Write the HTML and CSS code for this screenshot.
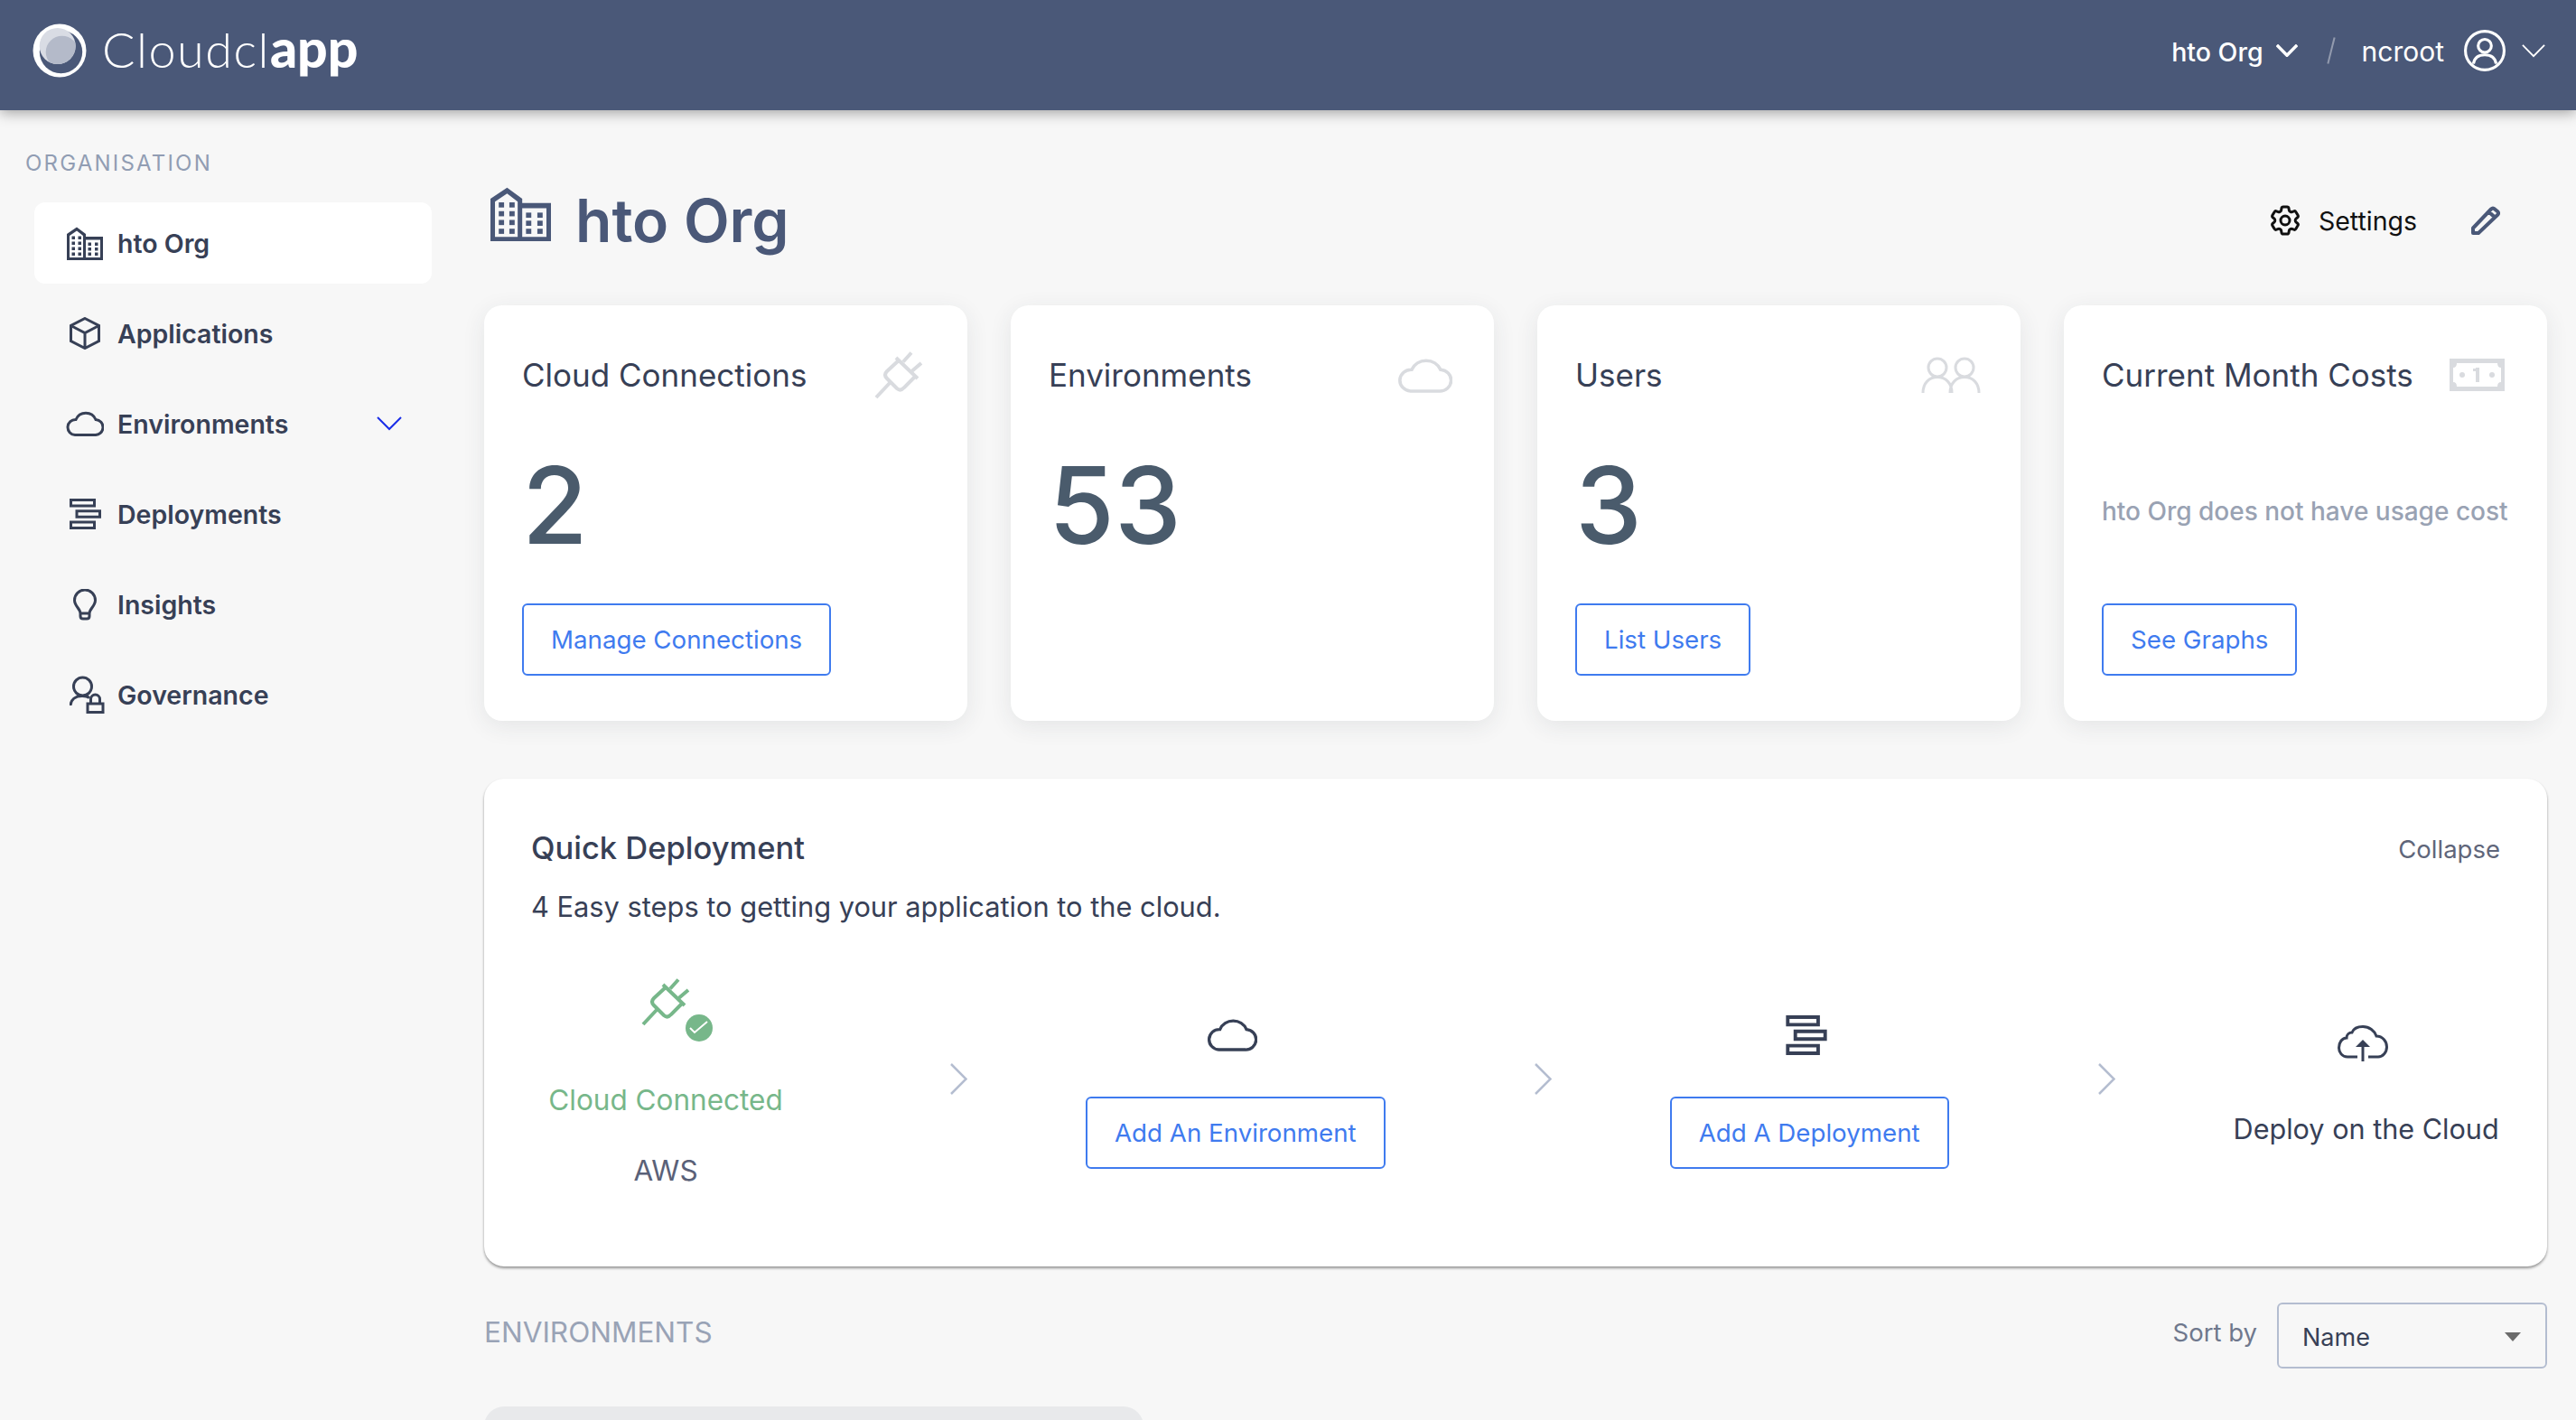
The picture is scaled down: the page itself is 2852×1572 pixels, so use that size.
FILE: index.html
```html
<!DOCTYPE html>
<html lang="en">
<head>
    <meta charset="UTF-8">
    <meta name="viewport" content="width=device-width, initial-scale=1.0">
    <title>Cloudclapp - hto Org</title>
    <link rel="stylesheet" href="styles.css">
</head>
<body>
    <!-- shared icons -->
    <svg class="icon-defs" aria-hidden="true">
        <symbol id="i-building" viewBox="0 0 40 37" preserveAspectRatio="none">
            <path class="fill" d="M0 37V8L11 0.5l10 7.5V11h19v26z"/>
            <path class="hole" d="M3 34V10l8-5.500 7 5.500v24zM21 14.500h16V34H21z"/>
            <g class="fill">
                <rect x="5.5" y="10.5" width="3.5" height="3.5"/><rect x="12.5" y="10.5" width="3.5" height="3.5"/>
                <rect x="5.5" y="16.5" width="3.5" height="3.5"/><rect x="12.5" y="16.5" width="3.5" height="3.5"/>
                <rect x="5.5" y="22.5" width="3.5" height="3.5"/><rect x="12.5" y="22.5" width="3.5" height="3.5"/>
                <rect x="5.5" y="28.5" width="3.5" height="3.5"/><rect x="12.5" y="28.5" width="3.5" height="3.5"/>
                <rect x="23.5" y="17.5" width="3.5" height="3.5"/><rect x="31" y="17.5" width="3.5" height="3.5"/>
                <rect x="23.5" y="23" width="3.5" height="3.5"/><rect x="31" y="23" width="3.5" height="3.5"/>
                <rect x="23.5" y="28.5" width="3.5" height="3.5"/><rect x="31" y="28.5" width="3.5" height="3.5"/>
            </g>
        </symbol>
        <symbol id="i-cube" viewBox="0 0 34 36">
            <path d="M17 1.5L32.5 9.5V26.5L17 34.5L1.5 26.5V9.5ZM1.5 9.5L17 17.5L32.5 9.5M17 17.5V34.5"/>
        </symbol>
        <symbol id="i-cloud" viewBox="0 0 42 28" preserveAspectRatio="none">
            <path d="M10 26.5h22a8.500 8.500 0 0 0 1-17A12 12 0 0 0 11 9.500a8.500 8.500 0 0 0-1 17z"/>
        </symbol>
        <symbol id="i-deploy" viewBox="0 0 35 34">
            <path d="M1.5 1.5h26V8h-26zM8 13.75h25.500v6.500H8zM1.5 26h26v6.500h-26z"/>
        </symbol>
        <symbol id="i-bulb" viewBox="0 0 26 35">
            <path d="M8 27C8 22 1.5 19 1.5 12.5A11.500 11.500 0 0 1 24.5 12.5C24.5 19 18 22 18 27ZM8 27v3q0 3 3 3h4q3 0 3-3v-3"/>
        </symbol>
        <symbol id="i-governance" viewBox="0 0 40 42">
            <circle cx="14.5" cy="12" r="10"/>
            <path d="M1 33C1.5 27 6 22.5 14 22.5c3 0 6 .5 8 2"/>
            <path d="M20 31h17v9.500H20zM23.5 31v-5a5 5 0 0 1 10 0v5"/>
        </symbol>
        <symbol id="i-plug" viewBox="0 0 54 53">
            <path d="M2 51L17 35M27 10L14 22Q10 26 14 30L25 41Q29 44.5 33 40L45 28M24 7L48 30M32 11.5L41 1.5M42 21.5L52 13"/>
        </symbol>
        <symbol id="i-people" viewBox="0 0 66 40">
            <circle cx="18" cy="12" r="10"/>
            <circle cx="48" cy="12" r="10"/>
            <path d="M2 40C2 29 9 22.5 18 22.5S34 29 34 40M32 40C32 29 39 22.5 48 22.5S64 29 64 40"/>
        </symbol>
        <symbol id="i-chevron" viewBox="0 0 28 16" preserveAspectRatio="none">
            <path d="M1 1L14 14L27 1"/>
        </symbol>
        <symbol id="i-step-arrow" viewBox="0 0 19 34" preserveAspectRatio="none">
            <path d="M1 1L17.5 17L1 33"/>
        </symbol>
    </svg>

    <header class="topbar">
        <div class="brand">
            <svg class="brand-mark" viewBox="0 0 60 60" aria-hidden="true">
                <defs><clipPath id="logo-clip"><circle cx="27.7" cy="25" r="20"/></clipPath></defs>
                <circle cx="30" cy="30" r="29.5" fill="#fff"/>
                <circle cx="31.5" cy="31.5" r="23.7" fill="#4a5878"/>
                <circle cx="27.7" cy="25" r="20" fill="#d9dce4"/>
                <circle cx="32.7" cy="31.7" r="18" fill="#b4bac9" clip-path="url(#logo-clip)"/>
            </svg>
            <span class="brand-name">Cloudcl<b>app</b></span>
        </div>
        <nav class="topbar-nav">
            <span class="topbar-org">hto Org</span>
            <svg class="topbar-chevron-bold" aria-hidden="true"><use href="#i-chevron"/></svg>
            <span class="topbar-slash"></span>
            <span class="topbar-user">ncroot</span>
            <svg class="topbar-avatar" viewBox="0 0 44 44" aria-hidden="true">
                <circle cx="22" cy="22" r="20.5"/>
                <circle cx="22" cy="17" r="7"/>
                <path d="M10 36C11 29 16 26.5 22 26.5S33 29 34 36"/>
            </svg>
            <svg class="topbar-chevron-thin" aria-hidden="true"><use href="#i-chevron"/></svg>
        </nav>
    </header>

    <div class="layout">
        <aside class="sidebar">
            <div class="sidebar-label">ORGANISATION</div>
            <ul class="side-nav">
                <li class="side-item active">
                    <span class="side-icon"><svg class="ic-building" aria-hidden="true"><use href="#i-building"/></svg></span>
                    hto Org
                </li>
                <li class="side-item">
                    <span class="side-icon"><svg class="ic-cube" aria-hidden="true"><use href="#i-cube"/></svg></span>
                    Applications
                </li>
                <li class="side-item">
                    <span class="side-icon"><svg class="ic-cloud" aria-hidden="true"><use href="#i-cloud"/></svg></span>
                    Environments
                    <svg class="side-chevron" aria-hidden="true"><use href="#i-chevron"/></svg>
                </li>
                <li class="side-item">
                    <span class="side-icon"><svg class="ic-deploy" aria-hidden="true"><use href="#i-deploy"/></svg></span>
                    Deployments
                </li>
                <li class="side-item">
                    <span class="side-icon"><svg class="ic-bulb" aria-hidden="true"><use href="#i-bulb"/></svg></span>
                    Insights
                </li>
                <li class="side-item">
                    <span class="side-icon"><svg class="ic-governance" aria-hidden="true"><use href="#i-governance"/></svg></span>
                    Governance
                </li>
            </ul>
        </aside>

        <main class="content">
            <div class="page-head">
                <svg class="page-icon" aria-hidden="true"><use href="#i-building"/></svg>
                <h1>hto Org</h1>
                <a class="settings-link">
                    <svg class="gear" viewBox="0 0 24 24" aria-hidden="true">
                        <path d="M9.594 3.94c.09-.542.56-.94 1.11-.94h2.593c.55 0 1.02.398 1.11.94l.213 1.281c.063.374.313.686.645.87.074.04.147.083.22.127.324.196.72.257 1.075.124l1.217-.456a1.125 1.125 0 011.37.49l1.296 2.247a1.125 1.125 0 01-.26 1.431l-1.003.827c-.293.24-.438.613-.431.992a6.759 6.759 0 010 .255c-.007.378.138.75.43.99l1.005.828c.424.35.534.954.26 1.43l-1.298 2.247a1.125 1.125 0 01-1.369.491l-1.217-.456c-.355-.133-.75-.072-1.076.124a6.57 6.57 0 01-.22.128c-.331.183-.581.495-.644.869l-.213 1.28c-.09.543-.56.941-1.11.941h-2.594c-.55 0-1.02-.398-1.11-.94l-.213-1.281c-.062-.374-.312-.686-.644-.87a6.52 6.52 0 01-.22-.127c-.325-.196-.72-.257-1.076-.124l-1.217.456a1.125 1.125 0 01-1.369-.49l-1.297-2.247a1.125 1.125 0 01.26-1.431l1.004-.827c.292-.24.437-.613.43-.992a6.932 6.932 0 010-.255c.007-.378-.138-.75-.43-.99l-1.004-.828a1.125 1.125 0 01-.26-1.43l1.297-2.247a1.125 1.125 0 011.37-.491l1.216.456c.356.133.751.072 1.076-.124.072-.044.146-.087.22-.128.332-.183.582-.495.644-.869l.214-1.281z"/>
                        <circle cx="12" cy="12" r="3"/>
                    </svg>
                    Settings
                </a>
                <svg class="pencil" viewBox="0 0 32 32" aria-hidden="true">
                    <path d="M2 30V24.500L22 3.500q2-2 4 0l3 2.500q2 2 0 4L8 30ZM19.500 6.500L26 12.500"/>
                </svg>
            </div>

            <section class="stat-grid">
                <div class="stat-card">
                    <div class="stat-head">
                        <span>Cloud Connections</span>
                        <svg class="stat-icon ic-stat-plug" aria-hidden="true"><use href="#i-plug"/></svg>
                    </div>
                    <div class="stat-value">2</div>
                    <a class="btn">Manage Connections</a>
                </div>
                <div class="stat-card">
                    <div class="stat-head">
                        <span>Environments</span>
                        <svg class="stat-icon ic-stat-cloud" aria-hidden="true"><use href="#i-cloud"/></svg>
                    </div>
                    <div class="stat-value">53</div>
                </div>
                <div class="stat-card">
                    <div class="stat-head">
                        <span>Users</span>
                        <svg class="stat-icon ic-stat-people" aria-hidden="true"><use href="#i-people"/></svg>
                    </div>
                    <div class="stat-value">3</div>
                    <a class="btn">List Users</a>
                </div>
                <div class="stat-card">
                    <div class="stat-head">
                        <span>Current Month Costs</span>
                        <svg class="ic-stat-money" viewBox="0 0 61 36" aria-hidden="true">
                            <rect width="61" height="36" fill="#d9dbdf"/>
                            <path d="M8 5h45q0 5 4 5v16q-4 0-4 5H8q0-5-4-5V10q4 0 4-5z" fill="#fff"/>
                            <circle cx="14" cy="18" r="3" fill="#d9dbdf"/>
                            <circle cx="47" cy="18" r="3" fill="#d9dbdf"/>
                            <rect x="29" y="10" width="4" height="16" fill="#d9dbdf"/>
                            <rect x="26" y="11" width="4" height="3" fill="#d9dbdf"/>
                        </svg>
                    </div>
                    <div class="stat-note">hto Org does not have usage cost</div>
                    <a class="btn">See Graphs</a>
                </div>
            </section>

            <section class="quick-panel">
                <div class="quick-head">
                    <h2>Quick Deployment</h2>
                    <a class="collapse-link">Collapse</a>
                </div>
                <p class="quick-sub">4 Easy steps to getting your application to the cloud.</p>
                <div class="steps">
                    <div class="step step-connected">
                        <div class="plug-wrap">
                            <svg class="ic-step-plug" aria-hidden="true"><use href="#i-plug"/></svg>
                            <svg class="plug-badge" viewBox="0 0 30 30" aria-hidden="true">
                                <circle cx="15" cy="15" r="15"/>
                                <path d="M5 15l5 5L24 8"/>
                            </svg>
                        </div>
                        <div class="step-status">Cloud Connected</div>
                        <div class="step-provider">AWS</div>
                    </div>
                    <svg class="step-arrow arrow-first" aria-hidden="true"><use href="#i-step-arrow"/></svg>
                    <div class="step step-env">
                        <svg class="ic-step-cloud" aria-hidden="true"><use href="#i-cloud"/></svg>
                        <a class="btn">Add An Environment</a>
                    </div>
                    <svg class="step-arrow" aria-hidden="true"><use href="#i-step-arrow"/></svg>
                    <div class="step step-deploy">
                        <svg class="ic-step-deploy" aria-hidden="true"><use href="#i-deploy"/></svg>
                        <a class="btn">Add A Deployment</a>
                    </div>
                    <svg class="step-arrow" aria-hidden="true"><use href="#i-step-arrow"/></svg>
                    <div class="step step-upload">
                        <svg class="ic-step-upload" viewBox="0 0 56 40" aria-hidden="true">
                            <path d="M22 35H11C5 35 1.5 30 1.5 25C1.5 19 5 14 10 14C10 10 13 8 16 8C18 3 23 1.5 28 1.5C35 1.5 41 6 43 12C50 12 54.5 18 54.5 24C54.5 30 50 35 45 35H34"/>
                            <path class="stem" d="M28 20V40"/>
                            <path class="head" d="M28 16l8 8h-16z"/>
                        </svg>
                        <div class="step-label">Deploy on the Cloud</div>
                    </div>
                </div>
            </section>

            <div class="env-row">
                <h3>ENVIRONMENTS</h3>
                <div class="sort-box">
                    <span class="sort-label">Sort by</span>
                    <div class="sort-select">Name<span class="caret"></span></div>
                </div>
            </div>
            <div class="env-card"></div>
        </main>
    </div>
</body>
</html>
```
FILE: styles.css
```css
* {
    box-sizing: border-box;
}
html, body {
    margin: 0;
    height: 100%;
}
body {
    font-family: Inter, "Liberation Sans", sans-serif;
    background: #f7f7f7;
    color: #374056;
    overflow: hidden;
}
h1, h2, h3, p, ul {
    margin: 0;
    padding: 0;
}
svg {
    display: block;
}
.icon-defs {
    position: absolute;
    width: 0;
    height: 0;
}

/* shared stroke for the line icons */
use {
    fill: none;
    stroke: currentColor;
}
.fill {
    fill: currentColor;
    stroke: none;
}
.hole {
    fill: var(--hole, #fff);
    stroke: none;
}

/* top bar */
.topbar {
    height: 122px;
    background: #4a5878;
    box-shadow: 0 3px 14px rgba(0,0,0,0.35);
    display: flex;
    align-items: center;
    justify-content: space-between;
    padding: 0 34px 10px 36px;
    color: #fff;
    position: relative;
}
.brand {
    display: flex;
    align-items: center;
    gap: 17px;
}
.brand-mark {
    width: 60px;
    height: 60px;
}
.brand-name {
    font-family: Lato, "Open Sans", sans-serif;
    font-size: 54px;
    font-weight: 300;
    line-height: 60px;
    letter-spacing: 1.5px;
    margin-top: -4px;
}
.brand-name b {
    font-size: 59px;
    font-weight: 900;
    letter-spacing: 0;
}
.topbar-nav {
    display: flex;
    align-items: center;
}
.topbar-org {
    font-size: 28.5px;
    font-weight: 500;
    padding-top: 2px;
}
.topbar-user {
    font-size: 30px;
    padding-top: 2px;
}
.topbar-chevron-bold {
    width: 24px;
    height: 14px;
    margin-left: 14px;
    stroke-width: 4;
}
.topbar-slash {
    width: 2px;
    height: 30px;
    background: rgba(255,255,255,0.4);
    transform: rotate(14deg);
    margin: 0 33px 0 36px;
}
.topbar-avatar {
    width: 46px;
    height: 46px;
    margin-left: 22px;
    fill: none;
    stroke: #fff;
    stroke-width: 3;
}
.topbar-chevron-thin {
    width: 26px;
    height: 15px;
    margin-left: 18px;
    stroke-width: 2;
}

.layout {
    display: flex;
    height: calc(100% - 122px);
}

/* sidebar */
.sidebar {
    width: 536px;
    flex: none;
    padding-top: 47px;
}
.sidebar-label {
    margin-left: 28px;
    font-size: 24px;
    line-height: 24px;
    letter-spacing: 2.2px;
    color: #919db3;
}
.side-nav {
    list-style: none;
    margin: 31px 0 0 38px;
    width: 440px;
}
.side-item {
    height: 90px;
    margin-bottom: 10px;
    display: flex;
    align-items: center;
    padding-left: 32px;
    gap: 12px;
    font-size: 28.5px;
    font-weight: 600;
    border-radius: 12px;
    position: relative;
}
.side-item.active {
    background: #fff;
}
.side-icon {
    width: 48px;
    display: flex;
    justify-content: center;
    stroke-width: 3;
}
.ic-building {
    width: 40px;
    height: 37px;
}
.ic-cube {
    width: 34px;
    height: 36px;
}
.ic-cloud {
    width: 42px;
    height: 28px;
}
.ic-deploy {
    width: 35px;
    height: 34px;
}
.ic-bulb {
    width: 26px;
    height: 35px;
}
.ic-governance {
    width: 40px;
    height: 42px;
    margin-left: 6px;
}
.side-chevron {
    width: 28px;
    height: 16px;
    margin-left: auto;
    margin-right: 33px;
    color: #1a2ee8;
    stroke-width: 2;
}

/* content */
.content {
    flex: 1;
    padding-right: 32px;
    min-width: 0;
}
.page-head {
    height: 84px;
    margin-top: 80px;
    display: flex;
    align-items: center;
    --hole: #f7f7f7;
}
.page-icon {
    width: 67px;
    height: 60px;
    margin-left: 7px;
    color: #4a5878;
    position: relative;
    top: -7px;
}
.page-head h1 {
    font-size: 66px;
    font-weight: 600;
    color: #4a5878;
    margin-left: 27px;
}
.settings-link {
    margin-left: auto;
    display: flex;
    align-items: center;
    gap: 17px;
    font-size: 28.5px;
    color: #111;
}
.gear {
    width: 40px;
    height: 40px;
    fill: none;
    stroke: #111;
    stroke-width: 1.8;
}
.pencil {
    width: 32px;
    height: 32px;
    margin: 0 52px 0 60px;
    fill: none;
    stroke: #4a5878;
    stroke-width: 4;
    stroke-linejoin: round;
}

/* stat cards */
.stat-grid {
    display: grid;
    grid-template-columns: repeat(4, minmax(0, 1fr));
    gap: 48px;
    margin-top: 52px;
}
.stat-card {
    height: 460px;
    background: #fff;
    border-radius: 20px;
    box-shadow: 0 6px 26px rgba(40,50,70,0.09);
    padding: 50px 42px 0;
}
.stat-head {
    height: 54px;
    display: flex;
    align-items: center;
    justify-content: space-between;
    font-size: 35px;
    white-space: nowrap;
}
.stat-icon {
    color: #d9dbdf;
    flex: none;
}
.ic-stat-plug {
    width: 54px;
    height: 53px;
    stroke-width: 4;
    margin-right: 7px;
}
.ic-stat-cloud {
    width: 61px;
    height: 39px;
    stroke-width: 2.5;
    margin-right: 4px;
}
.ic-stat-people {
    width: 66px;
    height: 40px;
    stroke-width: 3;
    margin-right: 2px;
}
.ic-stat-money {
    width: 61px;
    height: 36px;
    margin-right: 5px;
    flex: none;
}
.stat-value {
    height: 120px;
    margin-top: 57px;
    margin-bottom: 49px;
    font-size: 118px;
    font-weight: 500;
    line-height: 120px;
    color: #4a5b6c;
}
.stat-note {
    height: 120px;
    margin-top: 57px;
    margin-bottom: 49px;
    padding-top: 14px;
    display: flex;
    align-items: center;
    font-size: 28px;
    font-weight: 500;
    color: #99a2b3;
    white-space: nowrap;
}
.btn {
    display: inline-flex;
    align-items: center;
    height: 80px;
    padding: 0 30px;
    border: 2px solid #3f7bef;
    border-radius: 6px;
    font-size: 27.7px;
    color: #3f7bef;
    background: #fff;
    white-space: nowrap;
}

/* quick deployment */
.quick-panel {
    height: 540px;
    margin-top: 64px;
    padding: 49px 52px 0;
    background: #fff;
    border-radius: 22px;
    box-shadow: 0 2px 3px rgba(0,0,0,0.4);
}
.quick-head {
    display: flex;
    align-items: center;
    justify-content: space-between;
    height: 56px;
}
.quick-head h2 {
    font-size: 34.5px;
    font-weight: 500;
    line-height: 56px;
}
.collapse-link {
    font-size: 27.5px;
    color: #5f667a;
    padding-top: 2px;
}
.quick-sub {
    margin-top: 13px;
    font-size: 30.8px;
    line-height: 48px;
}
.steps {
    display: flex;
    margin-top: 52px;
}
.step {
    display: flex;
    flex-direction: column;
    align-items: center;
    flex: none;
}
.step-connected {
    width: 258px;
    margin-left: 20px;
    padding-top: 3px;
}
.plug-wrap {
    position: relative;
}
.ic-step-plug {
    width: 54px;
    height: 53px;
    color: #77b78a;
    stroke-width: 4;
}
.plug-badge {
    position: absolute;
    left: 49px;
    top: 40px;
    width: 30px;
    height: 30px;
    fill: #77b78a;
}
.plug-badge path {
    fill: none;
    stroke: #fff;
    stroke-width: 2;
}
.step-status {
    margin-top: 58px;
    font-size: 31.5px;
    line-height: 48px;
    color: #77b78a;
    white-space: nowrap;
}
.step-provider {
    margin-top: 30px;
    font-size: 31.5px;
    line-height: 48px;
    color: #5a6178;
}
.step-arrow {
    width: 19px;
    height: 35px;
    flex: none;
    margin: 97px 131px 0 165px;
    color: #b4bdd0;
    stroke-width: 2.5;
}
.arrow-first {
    margin-left: 186px;
}
.step-env {
    padding-top: 47px;
}
.ic-step-cloud {
    width: 56px;
    height: 37px;
    margin: 0 8px 50px 0;
    color: #374056;
    stroke-width: 2.5;
}
.step-deploy {
    padding-top: 44px;
}
.ic-step-deploy {
    width: 46px;
    height: 44px;
    margin: 0 6px 46px 0;
    color: #374056;
    stroke-width: 3;
}
.step-upload {
    padding-top: 55px;
}
.ic-step-upload {
    width: 56px;
    height: 40px;
    margin: 0 8px 51px 0;
    fill: none;
    stroke: #374056;
    stroke-width: 3;
}
.ic-step-upload .head {
    fill: #374056;
    stroke: none;
}
.step-label {
    font-size: 30.6px;
    line-height: 48px;
    white-space: nowrap;
}

/* environments list */
.env-row {
    display: flex;
    align-items: center;
    justify-content: space-between;
    margin-top: 40px;
}
.env-row h3 {
    font-size: 31.5px;
    font-weight: 400;
    color: #99a3b6;
    margin-bottom: 8px;
}
.sort-box {
    display: flex;
    align-items: center;
    gap: 22px;
}
.sort-label {
    font-size: 27.5px;
    color: #6f788d;
    margin-bottom: 8px;
}
.sort-select {
    width: 299px;
    height: 73px;
    border: 2px solid #b4bdd0;
    border-radius: 6px;
    padding: 3px 0 0 26px;
    display: flex;
    align-items: center;
    justify-content: space-between;
    font-size: 27px;
}
.caret {
    width: 0;
    height: 0;
    margin-right: 27px;
    border-left: 9px solid transparent;
    border-right: 9px solid transparent;
    border-top: 10px solid #6b6b6b;
}
.env-card {
    width: 730px;
    height: 80px;
    margin-top: 42px;
    background: #e8e9eb;
    border-radius: 22px 22px 0 0;
}
```
